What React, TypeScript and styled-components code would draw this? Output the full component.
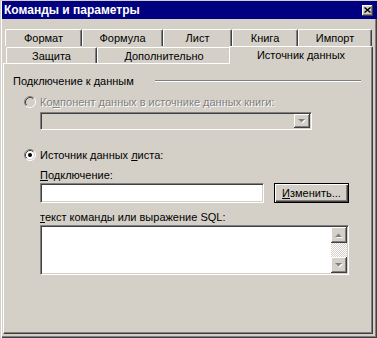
import React from "react";
import styled, { createGlobalStyle } from "styled-components";

const face = "#d4d0c8";
const shadow = "#808080";
const dark = "#404040";

const GlobalStyle = createGlobalStyle`
	html, body {
		margin: 0;
		padding: 0;
		background: ${face};
	}
	body {
		font-family: "Liberation Sans", Arial, sans-serif;
		font-size: 11px;
		color: #000;
	}
`;

const Window = styled.div`
	box-sizing: border-box;
	width: 377px;
	height: 338px;
	display: flex;
	flex-direction: column;
	padding: 1px 0 0 2px;
	background: ${face};
	box-shadow: inset 1px 1px 0 ${face}, inset 2px 1px 0 #fff;
`;

const TitleBar = styled.div`
	flex: none;
	height: 18px;
	display: flex;
	align-items: center;
	justify-content: space-between;
	padding: 0 4px 0 2px;
	background: #000080;
	color: #fff;
	font-weight: bold;
	font-size: 12px;
`;

const CloseButton = styled.div`
	box-sizing: border-box;
	width: 11px;
	height: 11px;
	display: flex;
	align-items: center;
	justify-content: center;
	background: ${face};
	box-shadow: inset -1px -1px 0 ${dark}, inset 1px 1px 0 #fff, inset -2px -2px 0 ${shadow};
`;

const Body = styled.div`
	flex: 1;
	display: flex;
	flex-direction: column;
	padding: 10px 4px 4px 1px;
	box-shadow: inset -1px -1px 0 ${dark}, inset -2px -2px 0 ${shadow};
`;

const TabRow = styled.div<{ $indent: number }>`
	display: flex;
	align-items: flex-end;
	height: 17px;
	padding-left: ${p => p.$indent}px;
`;

const Tab = styled.div<{ $w: number; $active?: boolean; $tall?: boolean }>`
	box-sizing: border-box;
	position: relative;
	width: ${p => p.$w}px;
	height: ${p => (p.$active ? 18 : p.$tall ? 17 : 16)}px;
	display: flex;
	align-items: center;
	justify-content: center;
	border: 1px solid #fff;
	border-bottom: none;
	border-right-color: ${dark};
	border-radius: 2px 2px 0 0;
	box-shadow: inset -1px 0 0 ${shadow};
	background: ${face};
	white-space: nowrap;
	${p => p.$active && `
		margin: 0 -2px -1px -2px;
		padding-bottom: 2px;
		z-index: 1;
	`}
`;

const Panel = styled.div`
	box-sizing: border-box;
	flex: 1;
	display: flex;
	flex-direction: column;
	border: 1px solid #fff;
	border-right-color: ${dark};
	border-bottom-color: ${dark};
	box-shadow: inset -1px -1px 0 ${shadow};
	padding: 10px 11px 0 9px;
`;

const GroupHeader = styled.div`
	display: flex;
	align-items: center;
	height: 14px;
`;

const GroupLabel = styled.span`
	width: 142px;
	flex: none;
`;

const GroupLine = styled.div`
	flex: 1;
	height: 0;
	border-top: 1px solid ${shadow};
	border-bottom: 1px solid #fff;
`;

const RadioRow = styled.div<{ $top: number }>`
	display: flex;
	align-items: center;
	height: 14px;
	margin: ${p => p.$top}px 0 0 11px;
`;

const RadioLabel = styled.span<{ $disabled?: boolean }>`
	margin-left: 4px;
	white-space: nowrap;
	color: ${p => (p.$disabled ? shadow : "#000")};
	text-shadow: ${p => (p.$disabled ? "1px 1px 0 #fff" : "none")};
`;

const FieldLabel = styled.div<{ $top: number }>`
	height: 14px;
	line-height: 14px;
	margin: ${p => p.$top}px 0 0 27px;
	white-space: nowrap;
`;

const Sunken = styled.div<{ $w: number; $h: number; $bg: string }>`
	box-sizing: border-box;
	width: ${p => p.$w}px;
	height: ${p => p.$h}px;
	display: flex;
	justify-content: flex-end;
	border: 1px solid ${shadow};
	border-right-color: #fff;
	border-bottom-color: #fff;
	box-shadow: inset 1px 1px 0 ${dark}, inset -1px -1px 0 ${face};
	padding: 1px;
	background: ${p => p.$bg};
`;

const Combo = styled(Sunken)`
	margin: 3px 0 0 27px;
`;

const FieldRow = styled.div`
	display: flex;
	align-items: center;
	margin: 1px 0 0 27px;
`;

const PushButton = styled.div`
	box-sizing: border-box;
	width: 75px;
	height: 20px;
	margin-left: 10px;
	display: flex;
	align-items: center;
	justify-content: center;
	border: 1px solid #000;
	background: ${face};
	box-shadow: inset 1px 1px 0 #fff, inset -1px -1px 0 ${dark}, inset -2px -2px 0 ${shadow};
`;

const TextBox = styled(Sunken)`
	margin: 1px 0 0 27px;
`;

const ScrollBar = styled.div`
	width: 16px;
	display: flex;
	flex-direction: column;
`;

const ArrowButton = styled.div<{ $h: number }>`
	box-sizing: border-box;
	width: 16px;
	height: ${p => p.$h}px;
	flex: none;
	display: flex;
	align-items: center;
	justify-content: center;
	background: ${face};
	box-shadow: inset -1px -1px 0 ${dark}, inset 1px 1px 0 #fff, inset -2px -2px 0 ${shadow};
`;

const Track = styled.div`
	flex: 1;
	background-color: #fff;
	background-image: repeating-conic-gradient(${face} 0 25%, #fff 0 50%);
	background-size: 2px 2px;
`;

const Arrow = ({ up }: { up?: boolean }) => (
	<svg width="8" height="5" viewBox="0 0 8 5">
		{up ? (
			<>
				<polygon points="1,5 8,5 4.5,1.5" fill="#fff" />
				<polygon points="0,4 7,4 3.5,0.5" fill={shadow} />
			</>
		) : (
			<>
				<polygon points="1,1 8,1 4.5,4.5" fill="#fff" />
				<polygon points="0,0 7,0 3.5,3.5" fill={shadow} />
			</>
		)}
	</svg>
);

const RadioMark = ({ checked, disabled }: { checked?: boolean; disabled?: boolean }) => (
	<svg width="12" height="12" viewBox="0 0 12 12">
		<circle cx="6" cy="6" r="5" fill={disabled ? face : "#fff"} />
		<path d="M2.11 9.89A5.5 5.5 0 0 1 9.89 2.11" fill="none" stroke={shadow} />
		<path d="M9.89 2.11A5.5 5.5 0 0 1 2.11 9.89" fill="none" stroke="#fff" />
		<path d="M2.82 9.18A4.5 4.5 0 0 1 9.18 2.82" fill="none" stroke={dark} />
		<path d="M9.18 2.82A4.5 4.5 0 0 1 2.82 9.18" fill="none" stroke={face} />
		{checked && <circle cx="6" cy="6" r="2" fill="#000" />}
	</svg>
);

const topTabs = [
	{ label: "Формат", w: 77 },
	{ label: "Формула", w: 81 },
	{ label: "Лист", w: 69 },
	{ label: "Книга", w: 66 },
	{ label: "Импорт", w: 74 },
];

const App = () => {
	return (
		<>
			<GlobalStyle />
			<Window>
				<TitleBar>
					<span>Команды и параметры</span>
					<CloseButton>
						<svg width="7" height="6" viewBox="0 0 7 6">
							<path d="M0.5 0.5L6.5 5.5M6.5 0.5L0.5 5.5" stroke="#000" strokeWidth="1.4" />
						</svg>
					</CloseButton>
				</TitleBar>
				<Body>
					<TabRow $indent={2}>
						{topTabs.map(t => (
							<Tab key={t.label} $w={t.w} $tall>
								{t.label}
							</Tab>
						))}
					</TabRow>
					<TabRow $indent={3}>
						<Tab $w={91}>Защита</Tab>
						<Tab $w={134}>Дополнительно</Tab>
						<Tab $w={144} $active>Источник данных</Tab>
					</TabRow>
					<Panel>
						<GroupHeader>
							<GroupLabel>Подключение к данным</GroupLabel>
							<GroupLine />
						</GroupHeader>
						<RadioRow $top={7}>
							<RadioMark disabled />
							<RadioLabel $disabled>
								Ко<u>м</u>понент данных в источнике данных книги:
							</RadioLabel>
						</RadioRow>
						<Combo $w={272} $h={18} $bg={face}>
							<ArrowButton $h={14}>
								<Arrow />
							</ArrowButton>
						</Combo>
						<RadioRow $top={18}>
							<RadioMark checked />
							<RadioLabel>
								Источник данных <u>л</u>иста:
							</RadioLabel>
						</RadioRow>
						<FieldLabel $top={6}>
							<u>П</u>одключение:
						</FieldLabel>
						<FieldRow>
							<Sunken $w={224} $h={20} $bg="#fff" />
							<PushButton>
								<span>
									<u>И</u>зменить...
								</span>
							</PushButton>
						</FieldRow>
						<FieldLabel $top={7}>
							<u>т</u>екст команды или выражение SQL:
						</FieldLabel>
						<TextBox $w={309} $h={50} $bg="#fff">
							<ScrollBar>
								<ArrowButton $h={16}>
									<Arrow up />
								</ArrowButton>
								<Track />
								<ArrowButton $h={16}>
									<Arrow />
								</ArrowButton>
							</ScrollBar>
						</TextBox>
					</Panel>
				</Body>
			</Window>
		</>
	);
};

export default App;
